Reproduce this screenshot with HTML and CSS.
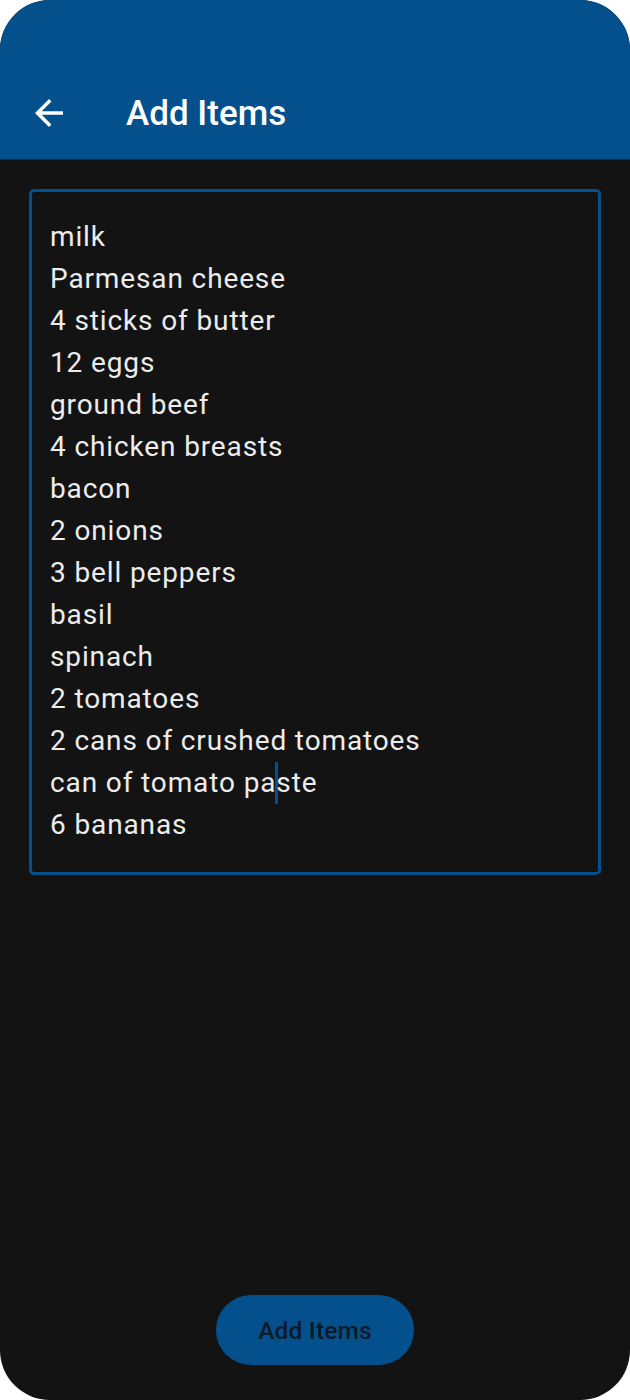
FILE: index.html
```html
<!DOCTYPE html>
<html>
<head>
<meta charset="utf-8">
<link rel="stylesheet" href="styles.css">
</head>
<body>
<div class="phone">
  <header class="appbar">
    <div class="bar-row">
      <svg class="back" width="42" height="42" viewBox="0 0 24 24"><path d="M20 11H7.83l5.59-5.59L12 4l-8 8 8 8 1.41-1.41L7.83 13H20v-2z" fill="#ffffff"/></svg>
      <h1 class="title">Add Items</h1>
    </div>
  </header>
  <main class="content">
    <div class="field">
      <div class="line">milk</div>
      <div class="line">Parmesan cheese</div>
      <div class="line">4 sticks of butter</div>
      <div class="line">12 eggs</div>
      <div class="line">ground beef</div>
      <div class="line">4 chicken breasts</div>
      <div class="line">bacon</div>
      <div class="line">2 onions</div>
      <div class="line">3 bell peppers</div>
      <div class="line">basil</div>
      <div class="line">spinach</div>
      <div class="line">2 tomatoes</div>
      <div class="line">2 cans of crushed tomatoes</div>
      <div class="line">can of tomato pa<span class="caret"></span>ste</div>
      <div class="line">6 bananas</div>
    </div>
    <div class="spacer"></div>
    <div class="actions">
      <button class="btn">Add Items</button>
    </div>
  </main>
</div>
</body>
</html>
```

FILE: styles.css
```css
html, body {
  margin: 0;
  padding: 0;
  background: #ffffff;
}
.phone {
  width: 630px;
  height: 1400px;
  border-radius: 50px;
  overflow: hidden;
  background: #131313;
  display: flex;
  flex-direction: column;
  font-family: Roboto, "Noto Sans", sans-serif;
}
.appbar {
  height: 160px;
  background: #03508d;
  box-sizing: border-box;
  padding-top: 66px;
  border-bottom: 1px solid #0a2a45;
}
.bar-row {
  height: 94px;
  display: flex;
  align-items: center;
}
.back {
  margin-left: 28px;
  flex: none;
}
.title {
  margin: 0 0 0 56px;
  color: #ffffff;
  font-size: 35px;
  font-weight: 500;
  letter-spacing: 0;
}
.content {
  flex: 1;
  display: flex;
  flex-direction: column;
  padding: 29px 29px 35px;
}
.field {
  border: 3px solid #03508d;
  border-radius: 5px;
  padding: 24px 18px 26px;
  color: #ececec;
  font-size: 28px;
  letter-spacing: 0.875px;
}
.line {
  height: 42px;
  line-height: 42px;
  white-space: nowrap;
}
.caret {
  display: inline-block;
  width: 3px;
  height: 42px;
  margin: 0 -1.5px;
  background: #03508d;
  vertical-align: top;
}
.spacer {
  flex: 1;
}
.actions {
  display: flex;
  justify-content: center;
}
.btn {
  width: 198px;
  height: 70px;
  border: none;
  border-radius: 35px;
  background: #03508d;
  color: #0c1a28;
  font-family: Roboto, "Noto Sans", sans-serif;
  font-size: 24.5px;
  font-weight: 500;
  letter-spacing: 0.17px;
  padding: 0;
}
```
